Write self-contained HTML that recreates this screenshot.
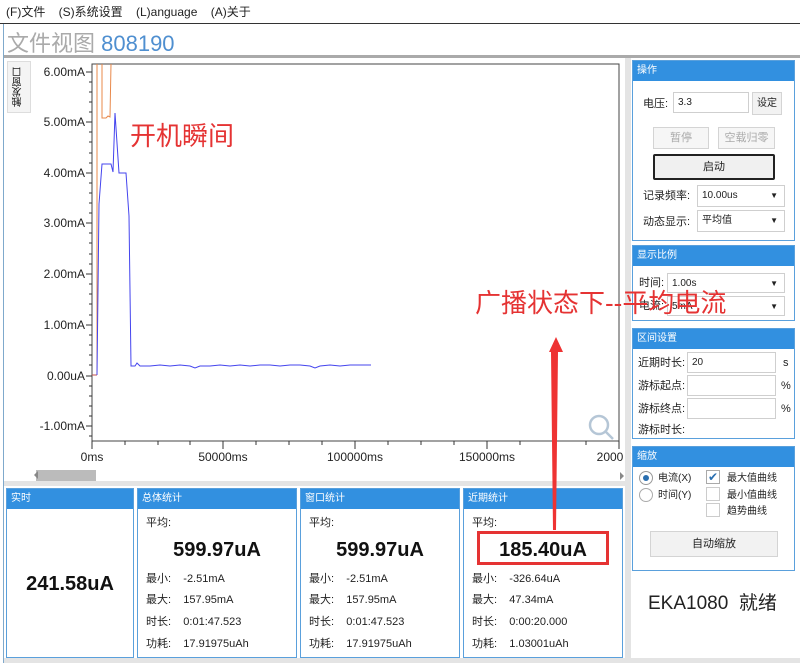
<!DOCTYPE html>
<html><head><meta charset="utf-8"><style>
*{margin:0;padding:0;box-sizing:border-box}
body{width:800px;height:663px;position:relative;background:#fff;font-family:"Liberation Sans","Noto Sans CJK SC",sans-serif;font-size:12px;color:#222;overflow:hidden}
.a{position:absolute}
.hd{position:absolute;left:0;right:0;top:0;height:20px;background:#3290e0;color:#fff;font-size:10px;line-height:20px;padding-left:4px}
.pn{position:absolute;border:1px solid #5aa0dc;background:#fff}
.lbl{position:absolute;font-size:11px;line-height:14px}
.inp{position:absolute;border:1px solid #cfcfcf;background:#fff;font-size:10px;line-height:19px;padding-left:4px}
.btn{position:absolute;border:1px solid #d4d4d4;background:#f2f2f2;font-size:11px;text-align:center}
.arr{position:absolute;right:6px;top:0;font-size:8px}
.big{position:absolute;left:0;right:0;text-align:center;font-weight:bold;font-size:20px;color:#111}
</style></head><body>
<div class="a" style="left:6px;top:3px;font-size:12px;word-spacing:0">(F)文件&nbsp;&nbsp;&nbsp;&nbsp;(S)系统设置&nbsp;&nbsp;&nbsp;&nbsp;(L)anguage&nbsp;&nbsp;&nbsp;&nbsp;(A)关于</div>
<div class="a" style="left:0;top:23px;width:800px;height:1px;background:#333"></div>
<div class="a" style="left:3px;top:24px;width:1px;height:639px;background:#7fa9cc"></div>
<div class="a" style="left:7px;top:26px;font-size:22px;color:#aaa">文件视图 <span style="color:#4f8fd0">808190</span></div>
<div class="a" style="left:4px;top:55px;width:796px;height:3px;background:#aaa"></div>
<div class="a" style="left:7px;top:61px;width:24px;height:52px;border:1px solid #ddd;background:#f4f4f4;font-size:10px;writing-mode:vertical-rl;line-height:22px;text-align:center;transform:rotate(180deg)">触发窗口</div>
<svg class="a" style="left:0;top:0" width="800" height="663">
<rect x="92" y="64" width="527" height="377" fill="none" stroke="#444" stroke-width="1"/>
<g stroke="#333" stroke-width="1">
<line x1="86" y1="72" x2="92" y2="72"/><line x1="86" y1="122" x2="92" y2="122"/><line x1="86" y1="173" x2="92" y2="173"/><line x1="86" y1="223" x2="92" y2="223"/><line x1="86" y1="274" x2="92" y2="274"/><line x1="86" y1="325" x2="92" y2="325"/><line x1="86" y1="376" x2="92" y2="376"/><line x1="86" y1="426" x2="92" y2="426"/>
<line x1="92" y1="441" x2="92" y2="449"/><line x1="223" y1="441" x2="223" y2="449"/><line x1="355" y1="441" x2="355" y2="449"/><line x1="487" y1="441" x2="487" y2="449"/><line x1="619" y1="441" x2="619" y2="449"/>
<line x1="125" y1="441" x2="125" y2="445"/><line x1="158" y1="441" x2="158" y2="445"/><line x1="190" y1="441" x2="190" y2="445"/><line x1="256" y1="441" x2="256" y2="445"/><line x1="289" y1="441" x2="289" y2="445"/><line x1="322" y1="441" x2="322" y2="445"/><line x1="388" y1="441" x2="388" y2="445"/><line x1="421" y1="441" x2="421" y2="445"/><line x1="454" y1="441" x2="454" y2="445"/><line x1="520" y1="441" x2="520" y2="445"/><line x1="553" y1="441" x2="553" y2="445"/><line x1="586" y1="441" x2="586" y2="445"/>
</g>
<g stroke="#333" stroke-width="1">
<line x1="89" y1="82" x2="92" y2="82"/><line x1="89" y1="92" x2="92" y2="92"/><line x1="89" y1="102" x2="92" y2="102"/><line x1="89" y1="112" x2="92" y2="112"/>
<line x1="89" y1="132" x2="92" y2="132"/><line x1="89" y1="142" x2="92" y2="142"/><line x1="89" y1="153" x2="92" y2="153"/><line x1="89" y1="163" x2="92" y2="163"/>
<line x1="89" y1="183" x2="92" y2="183"/><line x1="89" y1="193" x2="92" y2="193"/><line x1="89" y1="203" x2="92" y2="203"/><line x1="89" y1="213" x2="92" y2="213"/>
<line x1="89" y1="233" x2="92" y2="233"/><line x1="89" y1="243" x2="92" y2="243"/><line x1="89" y1="254" x2="92" y2="254"/><line x1="89" y1="264" x2="92" y2="264"/>
<line x1="89" y1="284" x2="92" y2="284"/><line x1="89" y1="294" x2="92" y2="294"/><line x1="89" y1="304" x2="92" y2="304"/><line x1="89" y1="315" x2="92" y2="315"/>
<line x1="89" y1="335" x2="92" y2="335"/><line x1="89" y1="345" x2="92" y2="345"/><line x1="89" y1="355" x2="92" y2="355"/><line x1="89" y1="365" x2="92" y2="365"/>
<line x1="89" y1="386" x2="92" y2="386"/><line x1="89" y1="396" x2="92" y2="396"/><line x1="89" y1="406" x2="92" y2="406"/><line x1="89" y1="416" x2="92" y2="416"/><line x1="89" y1="436" x2="92" y2="436"/>
</g>
<g font-family="Liberation Sans" font-size="12" fill="#222" text-anchor="end">
<text x="85" y="76">6.00mA</text><text x="85" y="126">5.00mA</text><text x="85" y="177">4.00mA</text><text x="85" y="227">3.00mA</text><text x="85" y="278">2.00mA</text><text x="85" y="329">1.00mA</text><text x="85" y="380">0.00uA</text><text x="85" y="430">-1.00mA</text>
</g>
<g font-family="Liberation Sans" font-size="12" fill="#222" text-anchor="middle">
<text x="92" y="461">0ms</text><text x="223" y="461">50000ms</text><text x="355" y="461">100000ms</text><text x="487" y="461">150000ms</text><text x="610" y="461">2000</text>
</g>
<polyline fill="none" stroke="#c0504d" stroke-width="1" points="92,375 97,375"/>
<polyline fill="none" stroke="#e8884a" stroke-width="1" points="97,375 97,64"/>
<polyline fill="none" stroke="#e8884a" stroke-width="1" points="102,64 102,118 106,118 108,116 110,117 111,64"/>
<polyline fill="none" stroke="#4444ee" stroke-width="1" points="97,375 99,204 102,164 111,164 113,172 115,113 119,173 126,173 129,216 131,366 135,366 137,363 140,366 150,366 160,365 170,366 180,365 190,366 195,368 200,366 210,366 220,365 230,366 240,365 250,366 260,365 270,365 280,366 290,365 300,365 310,366 315,368 320,366 330,365 340,366 350,365 360,365 371,365"/>
<g fill="none" stroke="#b5c6d6" stroke-width="2.5"><circle cx="599" cy="425" r="9"/><line x1="606" y1="432" x2="613" y2="439"/></g>
<rect x="36" y="470" width="60" height="11" fill="#bbb"/>
<path d="M38,471 l-4,4 4,4z" fill="#888"/>
<path d="M620,472 l4,4 -4,4z" fill="#888"/>
</svg>
<div class="a" style="left:130px;top:116px;font-size:26px;color:#e53333">开机瞬间</div>
<div class="a" style="left:4px;top:481px;width:622px;height:5px;background:#e4e4e4"></div>
<div class="a" style="left:625px;top:58px;width:6px;height:605px;background:#e4e4e4"></div>
<div class="a" style="left:4px;top:658px;width:796px;height:5px;background:#e4e4e4"></div>

<div class="pn" style="left:6px;top:488px;width:128px;height:170px"><div class="hd">实时</div><div class="big" style="top:84px">241.58uA</div></div>
<div class="pn" style="left:137px;top:488px;width:160px;height:170px"><div class="hd">总体统计</div>
<div class="lbl" style="left:8px;top:27px">平均:</div><div class="big" style="top:50px">599.97uA</div>
<div class="lbl" style="left:8px;top:83px">最小:&nbsp;&nbsp;&nbsp;&nbsp;-2.51mA</div><div class="lbl" style="left:8px;top:104px">最大:&nbsp;&nbsp;&nbsp;&nbsp;157.95mA</div><div class="lbl" style="left:8px;top:126px">时长:&nbsp;&nbsp;&nbsp;&nbsp;0:01:47.523</div><div class="lbl" style="left:8px;top:148px">功耗:&nbsp;&nbsp;&nbsp;&nbsp;17.91975uAh</div></div>
<div class="pn" style="left:300px;top:488px;width:160px;height:170px"><div class="hd">窗口统计</div>
<div class="lbl" style="left:8px;top:27px">平均:</div><div class="big" style="top:50px">599.97uA</div>
<div class="lbl" style="left:8px;top:83px">最小:&nbsp;&nbsp;&nbsp;&nbsp;-2.51mA</div><div class="lbl" style="left:8px;top:104px">最大:&nbsp;&nbsp;&nbsp;&nbsp;157.95mA</div><div class="lbl" style="left:8px;top:126px">时长:&nbsp;&nbsp;&nbsp;&nbsp;0:01:47.523</div><div class="lbl" style="left:8px;top:148px">功耗:&nbsp;&nbsp;&nbsp;&nbsp;17.91975uAh</div></div>
<div class="pn" style="left:463px;top:488px;width:160px;height:170px"><div class="hd">近期统计</div>
<div class="lbl" style="left:8px;top:27px">平均:</div>
<div class="a" style="left:13px;top:42px;width:132px;height:34px;border:3px solid #e53333"></div>
<div class="big" style="top:50px">185.40uA</div>
<div class="lbl" style="left:8px;top:83px">最小:&nbsp;&nbsp;&nbsp;&nbsp;-326.64uA</div><div class="lbl" style="left:8px;top:104px">最大:&nbsp;&nbsp;&nbsp;&nbsp;47.34mA</div><div class="lbl" style="left:8px;top:126px">时长:&nbsp;&nbsp;&nbsp;&nbsp;0:00:20.000</div><div class="lbl" style="left:8px;top:148px">功耗:&nbsp;&nbsp;&nbsp;&nbsp;1.03001uAh</div></div>

<div class="pn" style="left:632px;top:60px;width:163px;height:181px"><div class="hd">操作</div>
<div class="lbl" style="left:10px;top:36px">电压:</div><div class="inp" style="left:40px;top:31px;width:76px;height:21px">3.3</div>
<div class="btn" style="left:119px;top:31px;width:30px;height:23px;line-height:21px;font-size:10px">设定</div>
<div class="btn" style="left:20px;top:66px;width:56px;height:22px;line-height:20px;color:#aaa;background:#f6f6f6">暂停</div>
<div class="btn" style="left:85px;top:66px;width:57px;height:22px;line-height:20px;color:#aaa;background:#f6f6f6">空载归零</div>
<div class="btn" style="left:20px;top:93px;width:122px;height:26px;line-height:22px;border:2px solid #222;border-radius:2px;background:#f0f0f0">启动</div>
<div class="lbl" style="left:10px;top:128px">记录频率:</div><div class="inp" style="left:64px;top:124px;width:88px;height:22px;line-height:20px">10.00us<span class="arr">▼</span></div>
<div class="lbl" style="left:10px;top:154px">动态显示:</div><div class="inp" style="left:64px;top:149px;width:88px;height:22px;line-height:20px">平均值<span class="arr">▼</span></div></div>
<div class="pn" style="left:632px;top:245px;width:163px;height:76px"><div class="hd">显示比例</div>
<div class="lbl" style="left:6px;top:30px">时间:</div><div class="inp" style="left:34px;top:27px;width:118px;height:20px">1.00s<span class="arr">▼</span></div>
<div class="lbl" style="left:6px;top:53px">电流:</div><div class="inp" style="left:34px;top:50px;width:118px;height:20px">5mA<span class="arr">▼</span></div></div>
<div class="pn" style="left:632px;top:328px;width:163px;height:111px"><div class="hd">区间设置</div>
<div class="lbl" style="left:5px;top:27px">近期时长:</div><div class="inp" style="left:54px;top:23px;width:89px;height:21px">20</div><div class="lbl" style="left:150px;top:27px">s</div>
<div class="lbl" style="left:5px;top:50px">游标起点:</div><div class="inp" style="left:54px;top:46px;width:89px;height:21px"></div><div class="lbl" style="left:148px;top:50px">%</div>
<div class="lbl" style="left:5px;top:73px">游标终点:</div><div class="inp" style="left:54px;top:69px;width:89px;height:21px"></div><div class="lbl" style="left:148px;top:73px">%</div>
<div class="lbl" style="left:5px;top:94px">游标时长:</div></div>
<div class="pn" style="left:632px;top:446px;width:163px;height:125px"><div class="hd">缩放</div>
<div class="a" style="left:6px;top:24px;width:14px;height:14px;border:1px solid #999;border-radius:50%"><div class="a" style="left:3px;top:3px;width:6px;height:6px;border-radius:50%;background:#2a6fb0"></div></div>
<div class="lbl" style="left:25px;top:25px;font-size:10px">电流(X)</div>
<div class="a" style="left:6px;top:41px;width:14px;height:14px;border:1px solid #aaa;border-radius:50%"></div>
<div class="lbl" style="left:25px;top:42px;font-size:10px">时间(Y)</div>
<div class="a" style="left:73px;top:23px;width:14px;height:14px;border:1px solid #aaa;color:#2a6fb0;font-size:12px;line-height:12px;text-align:center">✔</div><div class="lbl" style="left:94px;top:25px;font-size:10px">最大值曲线</div>
<div class="a" style="left:73px;top:40px;width:14px;height:14px;border:1px solid #ccc"></div><div class="lbl" style="left:94px;top:42px;font-size:10px">最小值曲线</div>
<div class="a" style="left:73px;top:56px;width:14px;height:14px;border:1px solid #ccc"></div><div class="lbl" style="left:94px;top:58px;font-size:10px">趋势曲线</div>
<div class="btn" style="left:17px;top:84px;width:128px;height:26px;line-height:24px">自动缩放</div></div>
<div class="a" style="left:648px;top:588px;font-size:19px;color:#222">EKA1080&nbsp;&nbsp;就绪</div>

<div class="a" style="left:475px;top:283px;font-size:26px;color:#e53333;white-space:nowrap;z-index:5">广播状态下--平均电流</div>
<svg class="a" style="left:0;top:0;z-index:5" width="800" height="663">
<path d="M549,352 L556,337 L563,352 L558,352 L556,530 L553,530 L551,352 Z" fill="#ee3333"/>
</svg>
</body></html>
